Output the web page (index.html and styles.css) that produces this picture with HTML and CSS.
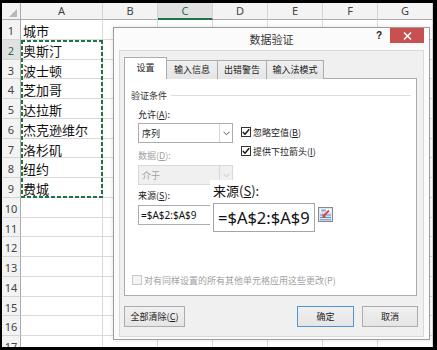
FILE: index.html
```html
<!DOCTYPE html>
<html>
<head>
    <meta charset="utf-8">
    <title>数据验证</title>
    <link rel="stylesheet" href="styles.css">
</head>
<body>
<div class="screen">
    <div class="sheet">
        <div class="hrow">
            <div class="corner"><span class="tri"></span></div>
            <div class="ch wide">A</div>
            <div class="ch">B</div>
            <div class="ch active">C</div>
            <div class="ch">D</div>
            <div class="ch">E</div>
            <div class="ch">F</div>
            <div class="ch">G</div>
        </div>
        <div class="row"><div class="rh">1</div><div class="c">城市</div><div class="rest"></div></div>
        <div class="row"><div class="rh active">2</div><div class="c">奥斯汀</div><div class="rest"></div></div>
        <div class="row"><div class="rh">3</div><div class="c">波士顿</div><div class="rest"></div></div>
        <div class="row"><div class="rh">4</div><div class="c">芝加哥</div><div class="rest"></div></div>
        <div class="row"><div class="rh">5</div><div class="c">达拉斯</div><div class="rest"></div></div>
        <div class="row"><div class="rh">6</div><div class="c">杰克逊维尔</div><div class="rest"></div></div>
        <div class="row"><div class="rh">7</div><div class="c">洛杉矶</div><div class="rest"></div></div>
        <div class="row"><div class="rh">8</div><div class="c">纽约</div><div class="rest"></div></div>
        <div class="row"><div class="rh">9</div><div class="c">费城</div><div class="rest"></div></div>
        <div class="row"><div class="rh">10</div><div class="c"></div><div class="rest"></div></div>
        <div class="row"><div class="rh">11</div><div class="c"></div><div class="rest"></div></div>
        <div class="row"><div class="rh">12</div><div class="c"></div><div class="rest"></div></div>
        <div class="row"><div class="rh">13</div><div class="c"></div><div class="rest"></div></div>
        <div class="row"><div class="rh">14</div><div class="c"></div><div class="rest"></div></div>
        <div class="row"><div class="rh">15</div><div class="c"></div><div class="rest"></div></div>
        <div class="row"><div class="rh">16</div><div class="c"></div><div class="rest"></div></div>
        <div class="row"><div class="rh">17</div><div class="c"></div><div class="rest"></div></div>
    </div>

    <!-- copy marquee around A2:A9 -->
    <div class="marquee"></div>

    <div class="dialog">
        <div class="titlebar">
            <span></span>
            <div class="title">数据验证</div>
            <div class="controls">
                <span class="help">?</span>
                <span class="close">
                    <svg width="9" height="8" viewBox="0 0 9 8"><path d="M1 0.5L8 7.5M8 0.5L1 7.5" stroke="#fff" stroke-width="1.5"/></svg>
                </span>
            </div>
        </div>
        <div class="client">
            <div class="tabs">
                <div class="tab on t1">设置</div>
                <div class="tab t2">输入信息</div>
                <div class="tab t3">出错警告</div>
                <div class="tab t4">输入法模式</div>
            </div>
            <div class="panel">
                <div class="legend"><span>验证条件</span><i></i></div>
                <div class="cond">
                    <div class="fields">
                        <label>允许(<u>A</u>):</label>
                        <div class="combo">序列
                            <span class="drop"><svg width="7" height="5" viewBox="0 0 7 5"><path d="M0.5 0.8L3.5 3.8L6.5 0.8" fill="none" stroke="#555"/></svg></span>
                        </div>
                        <label class="dim">数据(<u>D</u>):</label>
                        <div class="combo off">介于
                            <span class="drop"><svg width="7" height="5" viewBox="0 0 7 5"><path d="M0.5 0.8L3.5 3.8L6.5 0.8" fill="none" stroke="#c4c4c4"/></svg></span>
                        </div>
                        <label class="gap">来源(<u>S</u>):</label>
                        <div class="src">=$A$2:$A$9</div>
                    </div>
                    <div class="checks">
                        <div class="check">
                            <span class="box"><svg width="8" height="8" viewBox="0 0 8 8"><path d="M0.8 4L3 6.3L7.2 1.2" fill="none" stroke="#111" stroke-width="1.4"/></svg></span>
                            忽略空值(<u>B</u>)
                        </div>
                        <div class="check">
                            <span class="box"><svg width="8" height="8" viewBox="0 0 8 8"><path d="M0.8 4L3 6.3L7.2 1.2" fill="none" stroke="#111" stroke-width="1.4"/></svg></span>
                            提供下拉箭头(<u>I</u>)
                        </div>
                    </div>
                </div>
                <div class="check apply"><span class="box"></span>对有同样设置的所有其他单元格应用这些更改(P)</div>

                <!-- magnified view of the source field -->
                <div class="lens">
                    <div class="lens-label">来源(<u>S</u>):</div>
                    <div class="lens-row">
                        <div class="lens-input">=$A$2:$A$9</div>
                        <span class="pick">
                            <svg width="15" height="15" viewBox="0 0 15 15">
                                <rect x="0.5" y="0.5" width="14" height="14" fill="#dfe7f3" stroke="#8a8a8a"/>
                                <rect x="2" y="2" width="11" height="3" fill="#fff"/>
                                <rect x="3" y="2.5" width="5" height="2" fill="#7ea6dc"/>
                                <path d="M2 8h11M2 10.5h11M2 12.8h11" stroke="#5d8fd3"/>
                                <path d="M11 3.5L6 8.5" stroke="#d8443c" stroke-width="1.8"/>
                                <path d="M4.5 6.5v4h4z" fill="#d8443c"/>
                            </svg>
                        </span>
                    </div>
                </div>
            </div>
            <div class="buttons">
                <button class="btn clear">全部清除(<u>C</u>)</button>
                <button class="btn ok">确定</button>
                <button class="btn cancel">取消</button>
            </div>
        </div>
    </div>
</div>
</body>
</html>
```

FILE: styles.css
```css
body {
    margin: 0;
    background-color: #000;
    font-family: "Noto Sans CJK SC", sans-serif;
}

.screen {
    position: relative;
    margin: 3px 4px 0 2px;
    height: 344px;
    background-color: #fff;
    overflow: hidden;
}

/* spreadsheet */

.hrow,
.row {
    display: flex;
}

.hrow {
    height: 17px;
}

.row {
    height: 19.75px;
}

.corner {
    width: 19px;
    flex: none;
    box-sizing: border-box;
    display: flex;
    justify-content: flex-end;
    align-items: flex-end;
    padding: 0 3px 2px 0;
    background-color: #f3f3f3;
    border-right: 1px solid #ababab;
    border-bottom: 1px solid #ababab;
}

.tri {
    width: 0;
    height: 0;
    border-left: 8px solid transparent;
    border-bottom: 8px solid #b9b9b9;
}

.ch {
    width: 55px;
    flex: none;
    box-sizing: border-box;
    background-color: #f3f3f3;
    border-right: 1px solid #d4d4d4;
    border-bottom: 1px solid #ababab;
    font: 11px/16px "Noto Sans", sans-serif;
    color: #444;
    text-align: center;
}

.ch.wide {
    width: 82px;
}

.ch.active {
    background-color: #e1e1e1;
    color: #217346;
    border-bottom: 2px solid #217346;
}

.rh {
    width: 19px;
    flex: none;
    box-sizing: border-box;
    padding-top: 3px;
    background-color: #f3f3f3;
    border-right: 1px solid #ababab;
    border-bottom: 1px solid #d4d4d4;
    font: 11px/16px "Noto Sans", sans-serif;
    color: #444;
    text-align: center;
}

.rh.active {
    background-color: #e1e1e1;
    color: #217346;
}

.c {
    width: 82px;
    flex: none;
    box-sizing: border-box;
    padding: 2px 0 0 2px;
    border-right: 1px solid #dadada;
    border-bottom: 1px solid #dadada;
    font-size: 13px;
    line-height: 17px;
    color: #111;
    white-space: nowrap;
}

.rest {
    flex: 1;
    border-bottom: 1px solid #dadada;
    background: repeating-linear-gradient(90deg, transparent 0 54px, #dadada 54px 55px);
}

.marquee {
    position: absolute;
    left: 19px;
    top: 37px;
    width: 82px;
    height: 158px;
    background:
        repeating-linear-gradient(90deg, #217346 0 4px, transparent 4px 6px) top / 100% 2px no-repeat,
        repeating-linear-gradient(90deg, #217346 0 4px, transparent 4px 6px) bottom / 100% 2px no-repeat,
        repeating-linear-gradient(180deg, #217346 0 4px, transparent 4px 6px) left / 2px 100% no-repeat,
        repeating-linear-gradient(180deg, #217346 0 4px, transparent 4px 6px) right / 2px 100% no-repeat;
}

/* dialog */

.dialog {
    position: absolute;
    left: 111px;
    top: 24px;
    width: 317px;
    height: 313px;
    box-sizing: border-box;
    display: flex;
    flex-direction: column;
    background-color: #fbfbfb;
    border: 1px solid #9d9d9d;
    box-shadow: 0 0 5px rgba(0, 0, 0, 0.12);
}

.titlebar {
    height: 22px;
    flex: none;
    display: grid;
    grid-template-columns: 1fr auto 1fr;
}

.title {
    font-size: 11px;
    line-height: 22px;
    color: #333;
}

.controls {
    justify-self: end;
    display: flex;
    align-items: flex-start;
    gap: 8px;
    margin-right: 5px;
}

.help {
    padding-top: 2px;
    font: bold 10px/12px "Liberation Sans", sans-serif;
    color: #222;
}

.close {
    width: 34px;
    height: 15px;
    display: flex;
    align-items: center;
    justify-content: center;
    background-color: #c75050;
}

.client {
    flex: 1;
    display: flex;
    flex-direction: column;
    margin: 0 5px 2px 5px;
    padding: 6px 6px 0 4px;
    background-color: #f0f0f0;
    border: 1px solid #d9d9d9;
    font-size: 9px;
    color: #222;
}

.tabs {
    position: relative;
    z-index: 1;
    display: flex;
    align-items: flex-end;
    height: 22px;
    margin-bottom: -1px;
}

.tab {
    height: 19px;
    box-sizing: border-box;
    margin-right: -1px;
    border: 1px solid #acacac;
    border-bottom: none;
    background: linear-gradient(#f0f0f0, #e5e5e5);
    line-height: 18px;
    text-align: center;
}

.tab.on {
    height: 22px;
    line-height: 19px;
    background: #fff;
    position: relative;
    z-index: 1;
}

.t1 { width: 43px; }
.t2 { width: 52px; }
.t3 { width: 50px; }
.t4 { width: 58px; }

.panel {
    position: relative;
    height: 218px;
    box-sizing: border-box;
    padding: 9px 5px 0 6px;
    background-color: #fff;
    border: 1px solid #acacac;
}

.legend {
    display: flex;
    align-items: center;
    height: 14px;
    color: #333;
}

.legend i {
    flex: 1;
    height: 1px;
    margin-left: 4px;
    background-color: #dcdcdc;
}

.cond {
    display: flex;
    margin: 6px 0 0 7px;
}

.fields {
    width: 95px;
    display: flex;
    flex-direction: column;
}

label {
    height: 14px;
    line-height: 14px;
}

label.dim {
    margin-top: 6px;
    color: #a0a0a0;
}

label.gap {
    margin-top: 4px;
}

.combo {
    height: 20px;
    margin-top: 1px;
    box-sizing: border-box;
    display: flex;
    align-items: center;
    padding-left: 3px;
    background-color: #fff;
    border: 1px solid #acacac;
}

.combo.off {
    margin-top: 2px;
    background-color: #f0f0f0;
    border-color: #d9d9d9;
    color: #a0a0a0;
}

.drop {
    align-self: stretch;
    width: 12px;
    margin-left: auto;
    display: flex;
    align-items: center;
    justify-content: center;
    border-left: 1px solid #d6d6d6;
}

.src {
    width: 110px;
    height: 20px;
    margin-top: 2px;
    box-sizing: border-box;
    padding-left: 2px;
    border: 1px solid #acacac;
    font: 10px/18px "Noto Sans", sans-serif;
    color: #111;
}

.checks {
    display: flex;
    flex-direction: column;
    gap: 5px;
    margin: 17px 0 0 8px;
}

.check {
    display: flex;
    align-items: center;
    height: 14px;
    white-space: nowrap;
}

.box {
    width: 10px;
    height: 10px;
    box-sizing: border-box;
    margin-right: 2px;
    display: flex;
    align-items: center;
    justify-content: center;
    background-color: #fff;
    border: 1px solid #333;
}

.apply {
    margin: 48px 0 0 1px;
    color: #a0a0a0;
}

.apply .box {
    background-color: #f4f4f4;
    border-color: #c8c8c8;
}

.lens {
    position: absolute;
    left: 85px;
    top: 101px;
    width: 125px;
    height: 54px;
    box-sizing: border-box;
    padding: 3px 0 0 3px;
    background-color: #fff;
}

.lens-label {
    font-size: 13px;
    line-height: 15px;
    color: #111;
}

.lens-row {
    display: flex;
    align-items: flex-start;
    margin-top: 5px;
}

.lens-input {
    width: 102px;
    height: 29px;
    box-sizing: border-box;
    padding-left: 4px;
    border: 1px solid #a5a5a5;
    font: 16.5px/27px "Noto Sans", sans-serif;
    color: #111;
    white-space: nowrap;
    overflow: hidden;
}

.pick {
    display: flex;
    margin: 4px 0 0 3px;
}

.buttons {
    display: flex;
    gap: 8px;
    margin: 10px -1px 0 0;
}

.btn {
    height: 21px;
    padding: 0;
    box-sizing: border-box;
    background: linear-gradient(#f0f0f0, #e5e5e5);
    border: 1px solid #acacac;
    font-family: "Noto Sans CJK SC", sans-serif;
    font-size: 9px;
    color: #222;
}

.clear {
    width: 61px;
    margin-right: auto;
}

.ok {
    width: 57px;
    border-color: #4f95d8;
}

.cancel {
    width: 56px;
}
```
